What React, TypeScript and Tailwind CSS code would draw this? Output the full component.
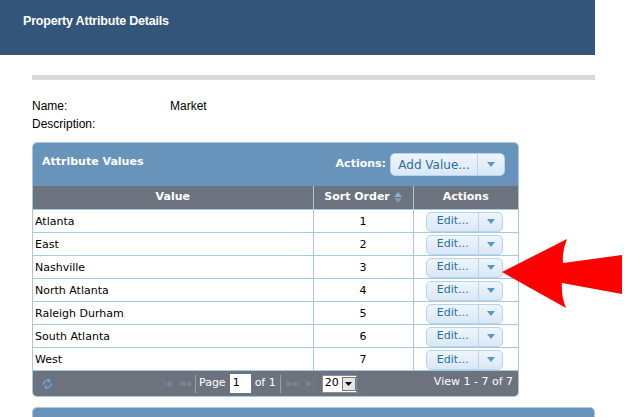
import React from 'react';

const rows = [
  { name: 'Atlanta', order: 1 },
  { name: 'East', order: 2 },
  { name: 'Nashville', order: 3 },
  { name: 'North Atlanta', order: 4 },
  { name: 'Raleigh Durham', order: 5 },
  { name: 'South Atlanta', order: 6 },
  { name: 'West', order: 7 },
];

function Caret({ className = '' }: { className?: string }) {
  return (
    <svg width="8" height="5" viewBox="0 0 8 5" className={className}>
      <path d="M0 0 L8 0 L4 5 Z" fill="#5b95c8" />
    </svg>
  );
}

function SplitButton({ label, wide }: { label: string; wide?: boolean }) {
  return (
    <div
      className={`flex items-stretch rounded-[5px] border border-[#b9d3ea] bg-gradient-to-b from-[#eef5fc] to-[#d9e8f6] text-[#2e6e9e] ${
        wide ? 'h-[23px] w-[115px] text-[12px]' : 'h-[20px] w-[77px] text-[11px]'
      }`}
    >
      <span className="flex flex-1 items-center justify-center">{label}</span>
      <span className={`flex items-center justify-center border-l border-[#b9d3ea] ${wide ? 'w-[27px]' : 'w-[24px]'}`}>
        <Caret />
      </span>
    </div>
  );
}

function Arrow() {
  return (
    <svg className="absolute left-[500px] top-[236px]" width="126" height="76" viewBox="500 236 126 76">
      <path
        d="M502 272 L567 239 Q562 251 563 263 L622 255 L622 294 L562 283 Q561 296 566 308 Z"
        fill="#ff0000"
      />
    </svg>
  );
}

export default function App() {
  return (
    <div className="relative h-[417px] w-[632px] overflow-hidden bg-white font-['Liberation_Sans',Arial,sans-serif]">
      {/* Page header */}
      <div className="h-[55px] w-[595px] bg-[#34557a] px-[23px] pt-[12px]">
        <h1 className="text-[12.5px] font-bold tracking-[-0.2px] text-white">Property Attribute Details</h1>
      </div>

      <div className="w-[595px] pl-[32px]">
        <div className="mt-[20px] h-[5px] bg-[#d9dadc]" />

        {/* Details */}
        <div className="mt-[17px] text-[12px] leading-[18px] text-black">
          <div className="flex">
            <span className="w-[138px]">Name:</span>
            <span>Market</span>
          </div>
          <div>Description:</div>
        </div>

        {/* Grid */}
        <div className="mt-[9px] w-[487px] overflow-hidden rounded-[5px] border border-[#a6c9e2] font-['DejaVu_Sans',Verdana,sans-serif] text-[11px]">
          <div className="flex h-[43px] items-center justify-between bg-[#6893bb] pl-[9px] pr-[13px]">
            <span className="-mt-[5px] font-bold text-white">Attribute Values</span>
            <div className="flex items-center gap-[4px]">
              <span className="text-[11px] font-bold text-white">Actions:</span>
              <SplitButton label="Add Value..." wide />
            </div>
          </div>

          <table className="w-full border-collapse">
            <thead>
              <tr className="h-[23px] bg-[#6c737e] font-bold text-white">
                <th className="w-[280px] border-r border-[#a6c9e2] font-bold">Value</th>
                <th className="w-[100px] border-r border-[#a6c9e2] font-bold">
                  <span className="inline-flex items-center gap-[4px]">
                    Sort Order
                    <svg width="8" height="11" viewBox="0 0 8 11">
                      <path d="M0 5 L8 5 L4 0 Z" fill="#7fb3e0" />
                      <path d="M0 6 L8 6 L4 11 Z" fill="#8a96a3" />
                    </svg>
                  </span>
                </th>
                <th className="font-bold">Actions</th>
              </tr>
            </thead>
            <tbody className="text-black">
              {rows.map((r) => (
                <tr key={r.name} className="h-[23px] border-t border-[#a6c9e2]">
                  <td className="border-r border-[#a6c9e2] px-[2px] pt-[3px]">{r.name}</td>
                  <td className="border-r border-[#a6c9e2] pt-[3px] text-center">{r.order}</td>
                  <td className="pt-[2px]">
                    <div className="flex justify-center pr-[2px]">
                      <SplitButton label="Edit..." />
                    </div>
                  </td>
                </tr>
              ))}
            </tbody>
          </table>

          {/* Pager */}
          <div className="relative flex h-[26px] items-center border-t border-[#a6c9e2] bg-[#6c737e] text-[11px] text-white">
            <svg className="ml-[9px]" width="11" height="12" viewBox="0 0 11 12" fill="none" stroke="#6aa6dd" strokeWidth="1.3">
              <path d="M2 7 A3.6 3.6 0 0 1 7.5 3" />
              <path d="M9 5 A3.6 3.6 0 0 1 3.5 9" />
              <path d="M6 1 L8 3 L6 4.5" />
              <path d="M5 11 L3 9 L5 7.5" />
            </svg>
            <div className="ml-[107px] flex items-center">
              <span className="w-[14px] text-center text-[8px] text-[#7b8591]">|◀</span>
              <span className="ml-[4px] w-[14px] text-center text-[8px] text-[#7b8591]">◀◀</span>
              <span className="ml-[3px] h-[18px] w-px bg-[#9aa3ad]" />
              <span className="ml-[3px]">Page</span>
              <span className="ml-[4px] flex h-[19px] w-[21px] items-center bg-white pl-[3px] text-black">1</span>
              <span className="ml-[4px]">of 1</span>
              <span className="ml-[4px] h-[18px] w-px bg-[#9aa3ad]" />
              <span className="ml-[5px] w-[14px] text-center text-[8px] text-[#7b8591]">▶▶</span>
              <span className="ml-[4px] w-[14px] text-center text-[8px] text-[#7b8591]">▶|</span>
              <span className="ml-[4px] flex h-[18px] w-[35px] items-center border border-[#8a8f96] bg-white text-black">
                <span className="flex-1 pl-[2px] text-[11px]">20</span>
                <span className="flex h-[14px] w-[14px] items-center justify-center border border-[#777] bg-[#e6e6e6]">
                  <svg width="7" height="4" viewBox="0 0 7 4">
                    <path d="M0 0 L7 0 L3.5 4 Z" fill="#000" />
                  </svg>
                </span>
              </span>
            </div>
            <span className="absolute right-[5px] top-[3px]">View 1 - 7 of 7</span>
          </div>
        </div>

        {/* Next panel */}
        <div className="mt-[10px] h-[20px] rounded-t-[5px] border border-[#a6c9e2] bg-[#6893bb]" />
      </div>

      <Arrow />
    </div>
  );
}
